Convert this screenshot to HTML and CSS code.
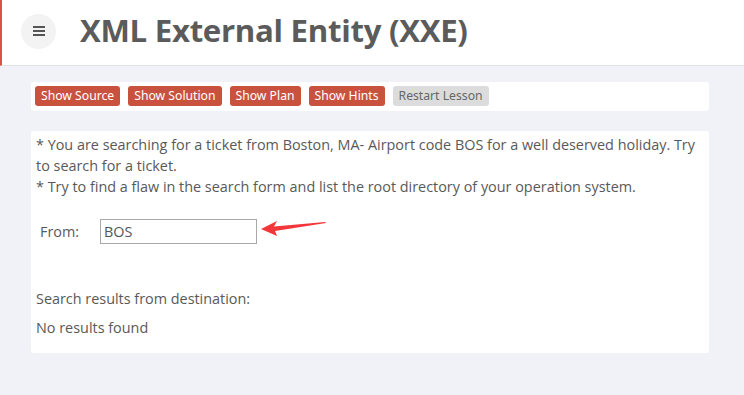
FILE: index.html
```html
<!DOCTYPE html>
<html>
<head>
<meta charset="utf-8">
<link rel="stylesheet" href="styles.css">
</head>
<body>
<header class="header">
  <button class="menu-btn" aria-label="menu">
    <svg width="12" height="10" viewBox="0 0 12 10"><rect x="0" y="0" width="12" height="2" fill="#555"/><rect x="0" y="4" width="12" height="2" fill="#555"/><rect x="0" y="8" width="12" height="2" fill="#555"/></svg>
  </button>
  <h1 class="title">XML External Entity (XXE)</h1>
</header>
<main class="main">
  <div class="panel toolbar">
    <span class="btn btn-red">Show Source</span>
    <span class="btn btn-red">Show Solution</span>
    <span class="btn btn-red">Show Plan</span>
    <span class="btn btn-red">Show Hints</span>
    <span class="btn btn-gray">Restart Lesson</span>
  </div>
  <div class="panel content">
    <p class="intro">* You are searching for a ticket from Boston, MA- Airport code BOS for a well deserved holiday. Try to search for a ticket.<br>* Try to find a flaw in the search form and list the root directory of your operation system.</p>
    <div class="form-row">
      <span class="label">From:</span>
      <span class="input">BOS</span>
      <svg class="arrow" width="66" height="18" viewBox="0 0 66 18"><path d="M0 9 L16 1 L13 6.5 L64 2 L65 3 L14 11 L16 16 Z" fill="#f2363a"/></svg>
    </div>
    <p class="results">Search results from destination:</p>
    <p class="none">No results found</p>
  </div>
</main>
</body>
</html>
```
FILE: styles.css
```css
body {
  margin: 0;
  background: #f0f2f7;
  font-family: "Open Sans", "Liberation Sans", sans-serif;
  color: #595959;
}
.header {
  height: 65px;
  background: #fff;
  border-bottom: 1px solid #e3e4e8;
  border-left: 2px solid #d9553f;
  display: flex;
  align-items: center;
  box-sizing: content-box;
}
.menu-btn {
  width: 35px;
  height: 35px;
  border-radius: 50%;
  border: none;
  background: #f3f3f3;
  margin-left: 19px;
  margin-top: -3px;
  display: flex;
  align-items: center;
  justify-content: center;
  padding: 0;
}
.title {
  margin: 0 0 0 24px;
  margin-top: -6px;
  font-family: "Open Sans", sans-serif;
  font-weight: 700;
  font-size: 31.2px;
  letter-spacing: -0.3px;
  color: #5b5b5b;
}
.main {
  padding: 16px 35px 0 31px;
  display: flex;
  flex-direction: column;
  gap: 20px;
}
.panel {
  background: #fff;
  border-radius: 3px;
  width: 678px;
}
.toolbar {
  height: 29px;
  box-sizing: border-box;
  padding: 4px 4px;
  display: flex;
  gap: 8px;
}
.btn {
  height: 20px;
  line-height: 20px;
  border-radius: 3px;
  font-family: "Noto Sans", sans-serif;
  font-size: 12.2px;
  padding: 0 6px;
  box-sizing: border-box;
}
.btn-red { background: #c9523f; color: #fff; }
.btn-gray { background: #dcdcdc; color: #666; }
.content {
  height: 222px;
  box-sizing: border-box;
  padding: 3px 5px;
  font-size: 14.4px;
}
.intro {
  margin: 0;
  line-height: 21px;
}
.form-row {
  display: flex;
  align-items: center;
  margin-top: 22px;
  padding-left: 4px;
}
.label { width: 60px; }
.input {
  width: 157px;
  height: 25px;
  box-sizing: border-box;
  border: 1px solid #a9a9a9;
  padding: 0 3px;
  line-height: 23px;
  color: #555;
}
.arrow { margin-left: 4px; margin-top: -5px; }
.results { margin: 45px 0 0 0; line-height: 20px; }
.none { margin: 9px 0 0 0; line-height: 20px; }
```
